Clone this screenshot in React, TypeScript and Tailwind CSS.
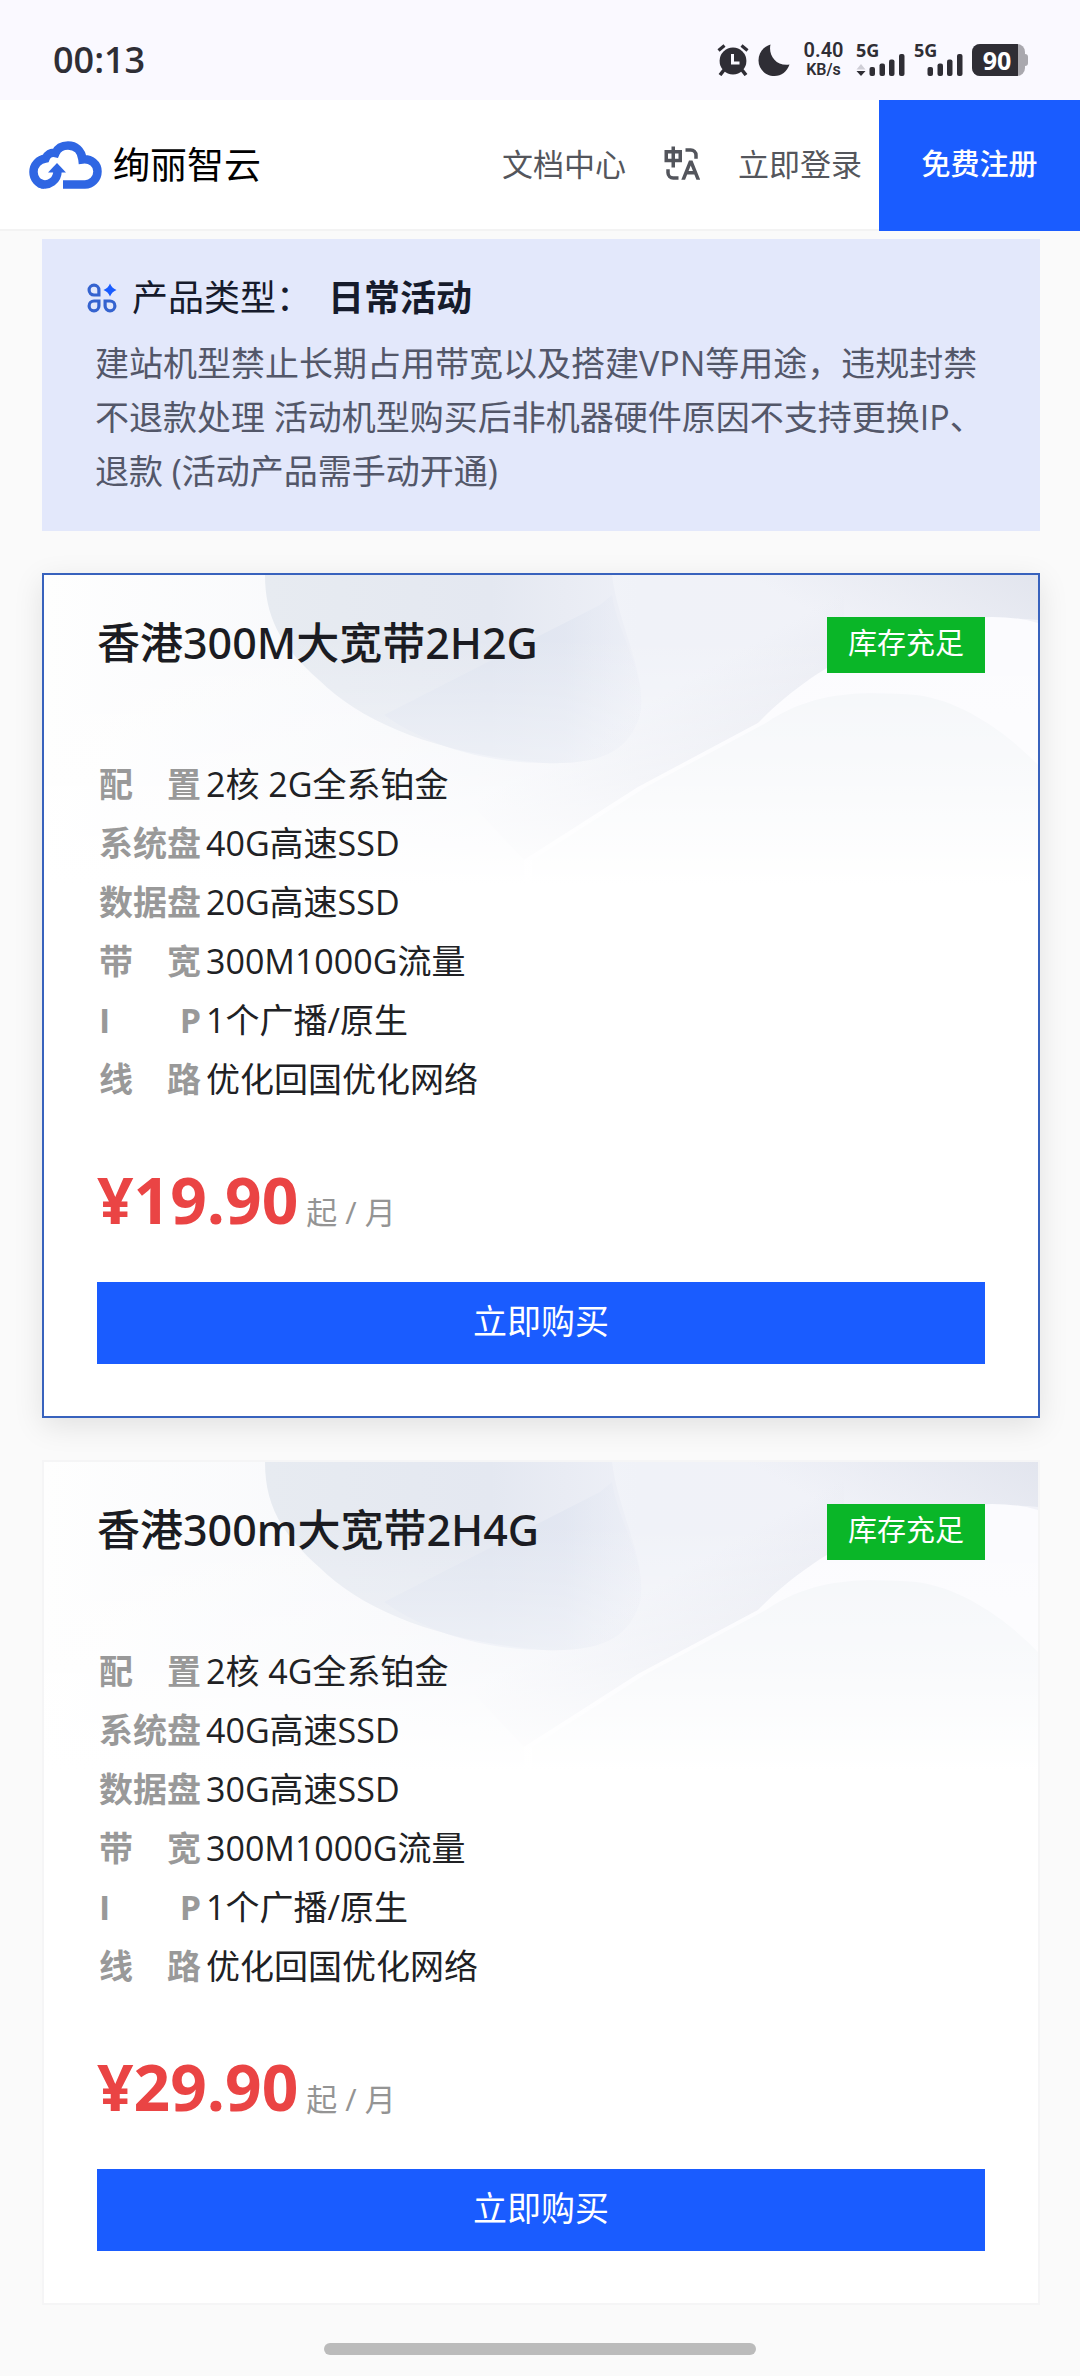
import React from 'react';

interface Plan {
  name: string;
  stock: string;
  price: string;
  active: boolean;
  specs: { label: string; value: string }[];
}

const PLANS: Plan[] = [
  {
    name: '香港300M大宽带2H2G',
    stock: '库存充足',
    price: '19.90',
    active: true,
    specs: [
      { label: '配 置', value: '2核 2G全系铂金' },
      { label: '系统盘', value: '40G高速SSD' },
      { label: '数据盘', value: '20G高速SSD' },
      { label: '带 宽', value: '300M1000G流量' },
      { label: 'I P', value: '1个广播/原生' },
      { label: '线 路', value: '优化回国优化网络' },
    ],
  },
  {
    name: '香港300m大宽带2H4G',
    stock: '库存充足',
    price: '29.90',
    active: false,
    specs: [
      { label: '配 置', value: '2核 4G全系铂金' },
      { label: '系统盘', value: '40G高速SSD' },
      { label: '数据盘', value: '30G高速SSD' },
      { label: '带 宽', value: '300M1000G流量' },
      { label: 'I P', value: '1个广播/原生' },
      { label: '线 路', value: '优化回国优化网络' },
    ],
  },
];

const AlarmIcon: React.FC = () => (
  <svg className="w-8 h-8" viewBox="0 0 32 32" fill="none" aria-hidden="true">
    <path d="M1.5 6.5 7.5 1.5M30.5 6.5 24.5 1.5" stroke="#2f2e35" strokeWidth="3.2" />
    <path d="M7 26 3 31M25 26 29 31" stroke="#2f2e35" strokeWidth="3.6" />
    <circle cx="16" cy="17" r="13.4" fill="#2f2e35" />
    <path d="M15.5 10v9h7" stroke="#faf9ff" strokeWidth="3" />
  </svg>
);

const MoonIcon: React.FC = () => (
  <svg className="w-8 h-8" viewBox="0 0 32 32" aria-hidden="true">
    <path d="M12.5 0.5C10 11 18 22.5 31.5 20.5C29 27.5 23.5 32 16.5 32C7.5 32 0.5 25 0.5 16.5C0.5 8.5 5.5 2.5 12.5 0.5Z" fill="#2f2e35" />
  </svg>
);

const Signal: React.FC<{ traffic?: boolean }> = ({ traffic }) => (
  <div className="flex flex-col w-[49px] h-8">
    <span className="text-[18px] leading-[13px] h-2.5 font-bold">5G</span>
    <svg className="w-[49px] h-[22px]" viewBox="0 0 49 22" fill="#2f2e35" aria-hidden="true">
      {traffic && <path d="M0.5 15.5 5 10l4.5 5.5z" fill="#cfced6" />}
      {traffic && <path d="M0.5 17h9L5 22z" />}
      <rect x="13.5" y="13" width="5.5" height="9" rx="2" />
      <rect x="23.5" y="9.5" width="5.5" height="12.5" rx="2" />
      <rect x="33" y="5.5" width="5.5" height="16.5" rx="2" />
      <rect x="43" y="0" width="5.5" height="22" rx="2" />
    </svg>
  </div>
);

const StatusBar: React.FC = () => (
  <div className="flex items-center justify-between h-[100px] pl-[53px] pr-[52px] pt-[20px] bg-[#faf9ff] text-[#2f2e35]">
    <span className="text-[36px] leading-[48px] font-semibold">00:13</span>
    <div className="flex items-center">
      <AlarmIcon />
      <div className="ml-[9px]">
        <MoonIcon />
      </div>
      <div className="ml-3 w-[43px] text-center font-semibold font-[Roboto]">
        <div className="text-[20px] leading-[20px]">0.40</div>
        <div className="text-[16px] leading-[20px]">KB/s</div>
      </div>
      <div className="flex ml-[11px] gap-[9px]">
        <Signal traffic />
        <Signal />
      </div>
      <div className="flex items-center ml-[9px]">
        <div className="flex items-center h-8 w-[53px] rounded-lg overflow-hidden bg-[#a9a8ae]">
          <span className="flex items-center justify-center w-[46px] h-8 pl-1 bg-[#2f2e35] text-white text-[25px] leading-8 font-bold">90</span>
        </div>
        <div className="w-[3px] h-3 rounded-r bg-[#a9a8ae]"></div>
      </div>
    </div>
  </div>
);

const CloudLogo: React.FC = () => (
  <svg className="w-[73px] h-12" viewBox="0 0 73 48" fill="none" aria-hidden="true">
    <path
      d="M34 43.5H56C62.5 43.5 68.5 38 68.5 30.5C68.5 23 62 17.5 53.5 18.5C52.5 9 46 4.5 39 4.5C33 4.5 28.5 7.5 26.5 12C22 11 18 13.5 16.5 17.5C10 18.5 4.5 23.5 4.5 31C4.5 38 9.5 43.5 16 43.5"
      stroke="#2f66e3"
      strokeWidth="8.5"
    />
    <path d="M15 43.5C23.5 43.5 29 38 29 29" stroke="#ffffff" strokeWidth="11.5" />
    <path d="M10 42C20 46.5 29 39 28.5 29" stroke="#2f66e3" strokeWidth="8.5" />
    <path d="M28 22 37 31.5H19z" fill="#2f66e3" />
  </svg>
);

const TranslateIcon: React.FC = () => (
  <svg className="w-[42px] h-[42px]" viewBox="0 0 24 24" fill="#53555c" aria-hidden="true">
    <path d="M5 15v2a2 2 0 0 0 2 2h3v2H7a4 4 0 0 1-4-4v-2h2zm13-5 4.4 11h-2.155l-1.201-3h-4.09l-1.199 3h-2.154L16 10h2zm-1 2.885L15.753 16h2.492L17 12.885zM8 2v2h4v7H8v3H6v-3H2V4h4V2h2zm9 1a4 4 0 0 1 4 4v2h-2V7a2 2 0 0 0-2-2h-3V3h3zM6 6H4v3h2V6zm4 0H8v3h2V6z" />
  </svg>
);

const TypeIcon: React.FC = () => (
  <svg className="w-[30px] h-[30px]" viewBox="0 0 30 30" fill="none" aria-hidden="true">
    <g stroke="#3563cf" strokeWidth="3.2">
      <path d="M7 2.2a4.9 4.9 0 0 1 4.9 4.9V12H7A4.9 4.9 0 0 1 7 2.2z" />
      <path d="M7 27.8a4.9 4.9 0 0 0 4.9-4.9V18H7a4.9 4.9 0 0 0 0 9.8z" />
      <path d="M23 27.8a4.9 4.9 0 0 1-4.9-4.9V18H23a4.9 4.9 0 0 1 0 9.8z" />
    </g>
    <path d="M23 0.5C24.5 4 26 5.5 29.5 7C26 8.5 24.5 10 23 13.5C21.5 10 20 8.5 16.5 7C20 5.5 21.5 4 23 0.5Z" fill="#1a5cff" />
  </svg>
);

const Header: React.FC = () => (
  <header className="flex h-[131px] bg-white">
    <div className="flex flex-1 items-center justify-between pl-[29px] pr-[17px] border-b-2 border-[#f3f3f3]">
      <a href="#home" className="flex items-center gap-[11px]">
        <CloudLogo />
        <span className="text-[37px] leading-[48px] text-black">绚丽智云</span>
      </a>
      <nav className="flex items-center pb-0.5 text-[31px] leading-[40px] text-[#54565c]">
        <a href="#docs">文档中心</a>
        <button type="button" aria-label="切换语言" className="mx-[35px]">
          <TranslateIcon />
        </button>
        <a href="#login">立即登录</a>
      </nav>
    </div>
    <a href="#register" className="flex items-center justify-center w-[201px] pb-1 bg-[#1a5cff] text-white text-[29px] leading-[40px] font-medium">
      免费注册
    </a>
  </header>
);

const Notice: React.FC = () => (
  <section className="pt-8 pb-[33px] pl-[53px] pr-[49px] bg-[#e3e8fb]">
    <h2 className="flex items-center -ml-2 text-[36px] leading-[54px] text-[#161b2c]">
      <TypeIcon />
      <span className="ml-[15px]">产品类型：</span>
      <strong className="ml-4 font-bold">日常活动</strong>
    </h2>
    <p className="mt-[11px] text-[34px] leading-[54px] text-[#535769]">
      建站机型禁止长期占用带宽以及搭建VPN等用途，违规封禁不退款处理 活动机型购买后非机器硬件原因不支持更换IP、退款 (活动产品需手动开通)
    </p>
  </section>
);

// soft folded-paper artwork behind the card heading
const CardArt: React.FC<{ id: string }> = ({ id }) => (
  <svg className="absolute inset-x-0 top-0 w-full h-[310px]" viewBox="0 0 994 310" preserveAspectRatio="none" aria-hidden="true">
    <defs>
      <linearGradient id={`${id}-base`} x1="0" x2="1" y1="0" y2="0">
        <stop offset="0" stopColor="#fefefe" />
        <stop offset="0.35" stopColor="#f7f8fb" />
        <stop offset="0.6" stopColor="#f0f2f8" />
        <stop offset="1" stopColor="#f1f2f8" />
      </linearGradient>
      <linearGradient id={`${id}-orb`} x1="0" x2="1" y1="0" y2="0">
        <stop offset="0" stopColor="#e7ebf1" />
        <stop offset="0.6" stopColor="#e4e8f1" />
        <stop offset="1" stopColor="#eef0f7" />
      </linearGradient>
      <linearGradient id={`${id}-facet`} x1="0" x2="1" y1="0" y2="0">
        <stop offset="0" stopColor="#dce2ef" stopOpacity="0.5" />
        <stop offset="0.7" stopColor="#dce2ef" stopOpacity="0.5" />
        <stop offset="1" stopColor="#e6eaf4" stopOpacity="0.2" />
      </linearGradient>
      <linearGradient id={`${id}-edge`} x1="0" x2="1" y1="1" y2="0">
        <stop offset="0.5" stopColor="#e2e5ee" stopOpacity="0" />
        <stop offset="1" stopColor="#e2e5ee" />
      </linearGradient>
      <linearGradient id={`${id}-fold`} gradientUnits="userSpaceOnUse" x1="600" x2="640" y1="130" y2="200">
        <stop offset="0" stopColor="#e6e8f0" stopOpacity="0" />
        <stop offset="1" stopColor="#e6e8f0" stopOpacity="0.7" />
      </linearGradient>
      <linearGradient id={`${id}-fade`} x1="0" x2="0" y1="0" y2="1">
        <stop offset="0.2" stopColor="#ffffff" stopOpacity="0" />
        <stop offset="0.65" stopColor="#ffffff" stopOpacity="0.45" />
        <stop offset="1" stopColor="#ffffff" />
      </linearGradient>
    </defs>
    <rect width="994" height="310" fill={`url(#${id}-base)`} />
    <path d="M221 0H568C574 50 604 100 596 140C585 175 560 190 500 188C400 180 320 150 275 105C235 70 221 40 221 0Z" fill={`url(#${id}-orb)`} />
    <path d="M556 30 340 140C390 175 450 188 500 188C560 190 585 175 596 140C604 100 574 60 568 20Z" fill={`url(#${id}-facet)`} />
    <path d="M700 0H994V45C930 38 860 60 790 110L700 160Z" fill={`url(#${id}-edge)`} />
    <path d="M480 285 594 212 714 148 800 90 800 0H600L400 200Z" fill={`url(#${id}-fold)`} />
    <path d="M480 285 594 212 714 148C770 90 860 42 948 42Q975 42 994 48V310H480Z" fill="#fbfbfe" />
    <path d="M488 285 602 212 722 148C775 112 830 118 872 120C920 126 965 160 994 190V310H488Z" fill="#f4f6f9" />
    <rect width="994" height="310" fill={`url(#${id}-fade)`} />
  </svg>
);

const PlanCard: React.FC<{ plan: Plan; id: string }> = ({ plan, id }) => (
  <article
    className={`relative border-2 bg-white px-[53px] pt-[42px] pb-[52px] ${
      plan.active ? 'border-[#3862bd] shadow-[0_8px_28px_rgba(0,0,0,0.1)]' : 'border-[#f5f5f6]'
    }`}
  >
    <CardArt id={id} />
    <div className="relative">
      <div className="flex items-start justify-between h-14">
        <h3 className="text-[43px] leading-[52px] font-medium font-['Noto_Sans','Noto_Sans_CJK_SC',sans-serif] text-[#1b1c22]">{plan.name}</h3>
        <span className="w-[158px] h-14 bg-[#0ab628] text-center text-[29px] leading-[52px] text-white">{plan.stock}</span>
      </div>

      <dl className="mt-[82px] ml-0.5 text-[34px] leading-[59px]">
        {plan.specs.map((spec) => (
          <div key={spec.label} className="flex gap-[5px]">
            <dt className="w-[102px] font-bold text-[#999999] [text-align-last:justify]">{spec.label}</dt>
            <dd className="text-[#202124]">{spec.value}</dd>
          </div>
        ))}
      </dl>

      <div className="flex items-baseline gap-2 h-[84px] mt-[49px]">
        <span className="text-[64px] leading-[84px] font-bold text-[#ea4444]">¥{plan.price}</span>
        <span className="text-[31px] leading-[40px] text-[#949494]">起 / 月</span>
      </div>

      <button type="button" className="block w-full h-[82px] mt-10 bg-[#1a5cff] pb-1 text-center text-[34px] leading-[76px] text-white">
        立即购买
      </button>
    </div>
  </article>
);

const App: React.FC = () => {
  return (
    <div className="min-h-screen flex flex-col bg-[#fafafa] font-['Open_Sans','Noto_Sans_CJK_SC',sans-serif]">
      <StatusBar />
      <Header />
      <main className="flex flex-col gap-[42px] pl-[42px] pr-10 pt-2">
        <Notice />
        {PLANS.map((plan, idx) => (
          <PlanCard key={plan.name} plan={plan} id={`plan-${idx}`} />
        ))}
      </main>
      <div className="flex justify-center pt-[38px] pb-[21px]">
        <div className="w-2/5 h-3 rounded-full bg-[#bbbbbb]"></div>
      </div>
    </div>
  );
};

export default App;
